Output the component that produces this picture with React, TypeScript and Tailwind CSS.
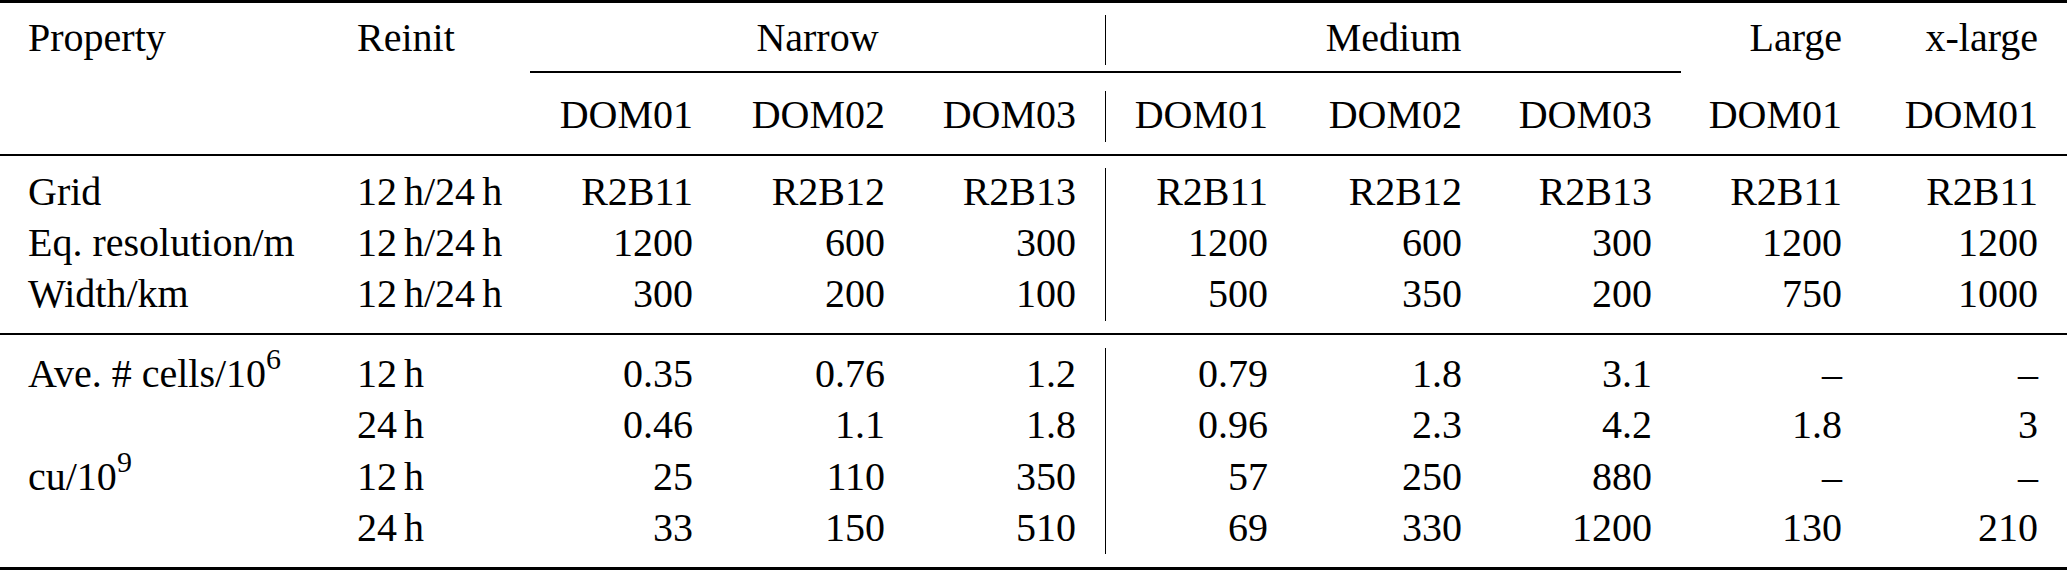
import React from 'react';

type Cell = React.ReactNode;

const GRID = 'grid grid-cols-[328px_202px_192px_192px_191px_192px_194px_190px_190px_196px]';

function Thin() {
  return <span className="inline-block w-[7px]" />;
}

const both = (
  <>
    12<Thin />h/24<Thin />h
  </>
);
const h12 = (
  <>
    12<Thin />h
  </>
);
const h24 = (
  <>
    24<Thin />h
  </>
);

const block1: Cell[][] = [
  ['Grid', both, 'R2B11', 'R2B12', 'R2B13', 'R2B11', 'R2B12', 'R2B13', 'R2B11', 'R2B11'],
  ['Eq. resolution/m', both, '1200', '600', '300', '1200', '600', '300', '1200', '1200'],
  ['Width/km', both, '300', '200', '100', '500', '350', '200', '750', '1000'],
];

const block2: Cell[][] = [
  [
    <>
      Ave. # cells/10<sup>6</sup>
    </>,
    h12, '0.35', '0.76', '1.2', '0.79', '1.8', '3.1', '–', '–',
  ],
  ['', h24, '0.46', '1.1', '1.8', '0.96', '2.3', '4.2', '1.8', '3'],
  [
    <>
      cu/10<sup>9</sup>
    </>,
    h12, '25', '110', '350', '57', '250', '880', '–', '–',
  ],
  ['', h24, '33', '150', '510', '69', '330', '1200', '130', '210'],
];

function Row({ cells, height, lift }: { cells: Cell[]; height: string; lift?: boolean }) {
  return (
    <>
      {cells.map((c, i) => {
        const pad = lift ? 'pb-[4px]' : '';
        if (i === 0) {
          return (
            <div key={i} className={`${height} ${pad} flex items-center pl-[28px] whitespace-nowrap`}>
              {c}
            </div>
          );
        }
        if (i === 1) {
          return (
            <div key={i} className={`${height} ${pad} flex items-center pl-[29px] whitespace-nowrap`}>
              {c}
            </div>
          );
        }
        return (
          <div
            key={i}
            className={`${height} ${pad} flex items-center justify-end pr-[29px] whitespace-nowrap ${
              i === 5 ? 'border-l-[1.5px] border-black' : ''
            }`}
          >
            {c}
          </div>
        );
      })}
    </>
  );
}

export default function App() {
  return (
    <div className="w-[2067px] h-[570px] bg-white text-black [font-family:Liberation_Serif,Times_New_Roman,serif] text-[40px] leading-none overflow-hidden">
      <div className={GRID}>
        {/* top rule */}
        <div className="col-span-10 h-[3px] bg-black" />
        <div className="col-span-10 h-[12px]" />

        {/* header row 1 */}
        <div className="h-[50px] pb-[4px] flex items-center pl-[28px]">Property</div>
        <div className="h-[50px] pb-[4px] flex items-center pl-[29px]">Reinit</div>
        <div className="col-span-3 h-[50px] pb-[4px] flex items-center justify-center">Narrow</div>
        <div className="col-span-3 h-[50px] pb-[4px] flex items-center justify-center border-l-[1.5px] border-black">
          Medium
        </div>
        <div className="h-[50px] pb-[4px] flex items-center justify-end pr-[29px]">Large</div>
        <div className="h-[50px] pb-[4px] flex items-center justify-end pr-[29px]">x-large</div>

        {/* cmidrules */}
        <div className="col-span-2 h-[26px]" />
        <div className="col-span-3 h-[26px] pt-[6px]">
          <div className="h-[2px] bg-black" />
        </div>
        <div className="col-span-3 h-[26px] pt-[6px]">
          <div className="h-[2px] bg-black" />
        </div>
        <div className="col-span-2 h-[26px]" />

        {/* header row 2 */}
        <Row
          cells={['', '', 'DOM01', 'DOM02', 'DOM03', 'DOM01', 'DOM02', 'DOM03', 'DOM01', 'DOM01']}
          height="h-[51px]"
          lift
        />

        <div className="col-span-10 h-[12px]" />
        <div className="col-span-10 h-[2px] bg-black" />
        <div className="col-span-10 h-[12px]" />

        {block1.map((r, i) => (
          <Row key={i} cells={r} height="h-[51px]" lift />
        ))}

        <div className="col-span-10 h-[12px]" />
        <div className="col-span-10 h-[2px] bg-black" />
        <div className="col-span-10 h-[13px]" />

        {block2.map((r, i) => (
          <Row key={i} cells={r} height="h-[51.5px]" />
        ))}

        <div className="col-span-10 h-[13px]" />
        <div className="col-span-10 h-[3px] bg-black" />
      </div>
    </div>
  );
}
